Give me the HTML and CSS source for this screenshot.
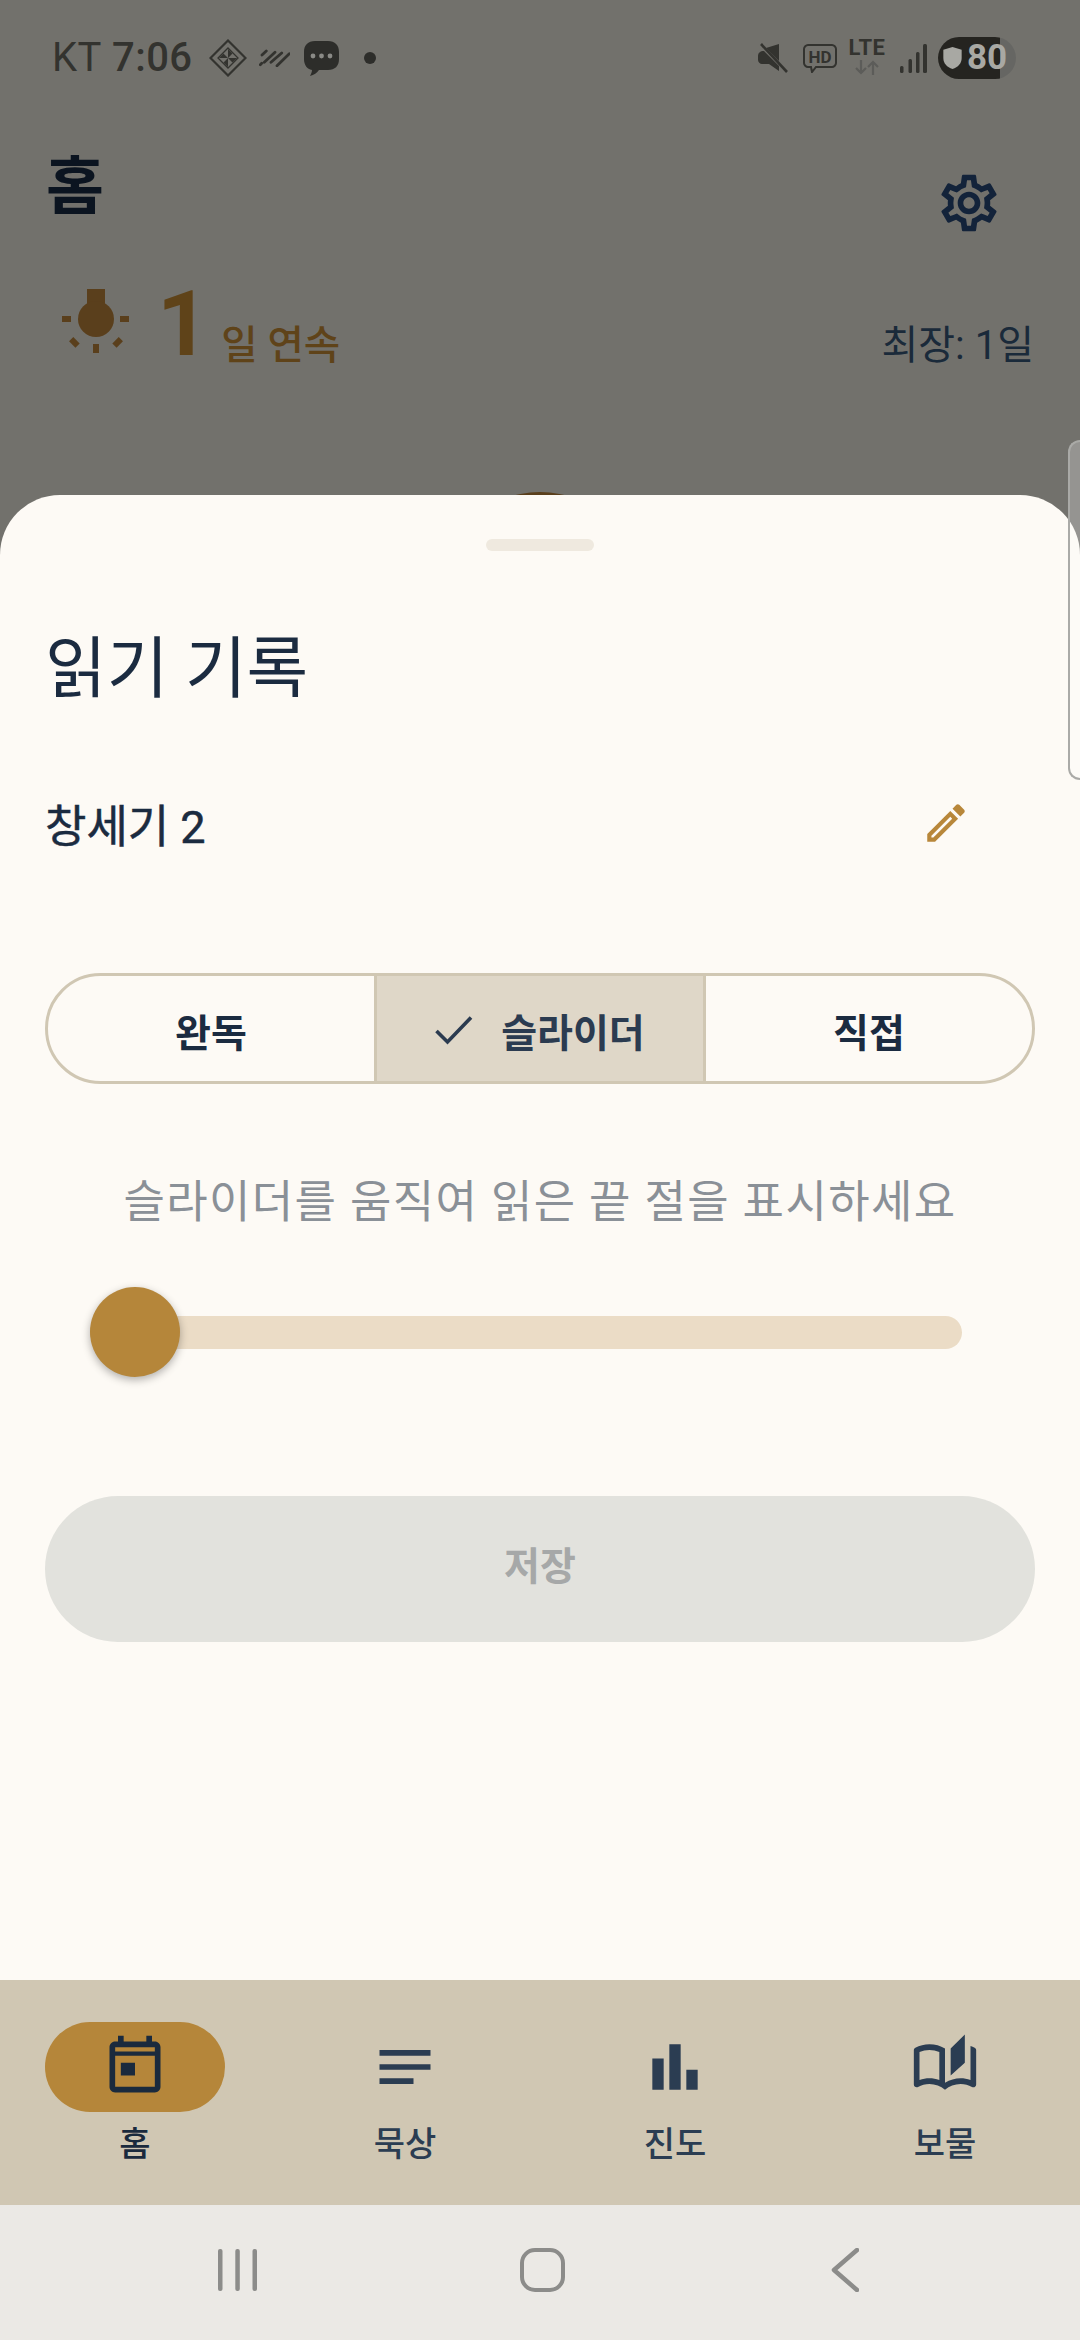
FILE: index.html
```html
<!DOCTYPE html>
<html lang="ko">
	<head>
		<meta charset="UTF-8" />
		<meta name="viewport" content="width=device-width, initial-scale=1.0" />
		<title>읽기 기록</title>
		<link rel="stylesheet" href="styles.css">
	</head>
	<body>
		<div class="backdrop">
			<div class="status">
				<div class="status-left">
					<span class="clock"><span class="carrier">KT</span> 7:06</span>
					<svg class="st-diamond" viewBox="0 0 38 38" fill="none" stroke="#33332f" stroke-width="1.300">
						<path d="M19 1.500 36.500 19 19 36.500 1.500 19z" stroke-width="2.200" />
						<path d="M19 9 29 19 19 29 9 19z" />
						<path fill="#33332f" stroke="none" d="M19 10l4.500 4.500-4.500 4.500zM28 19l-4.500 4.500-4.500-4.500zM19 28l-4.500-4.500 4.500-4.500zM10 19l4.500-4.500 4.500 4.500z" />
					</svg>
					<svg class="st-stripes" viewBox="0 0 31 18" fill="none" stroke="#33332f" stroke-width="2.800" stroke-linecap="round">
						<path d="M3 6 7.300 2M1.300 15.700 2.700 14.300M5.300 13.300 16 3.300M12 13.300 22.700 4M18 16.700 30.300 4.700" />
					</svg>
					<svg class="st-chat" viewBox="0 0 35 37">
						<path d="M11 1h13c7 0 11 4 11 11v7c0 7-4 11-11 11H15c-2 3-5 5-9 6 1-2 2-4 2-6C3 29 0 25 0 19v-7C0 5 4 1 11 1z" fill="#2d2d2a" />
						<circle cx="9" cy="16" r="2.400" fill="#8a8a86" />
						<circle cx="17.500" cy="16" r="2.400" fill="#8a8a86" />
						<circle cx="26" cy="16" r="2.400" fill="#8a8a86" />
					</svg>
					<span class="st-dot"></span>
				</div>
				<div class="status-right">
					<svg class="st-mute" viewBox="0 0 30 30">
						<path d="M21 1v17L8 5zM6 8l15 15v5L11 21H4c-2 0-4-2-4-4v-4c0-3 2-5 6-5z" fill="#33332f" />
						<path d="M3 1 29 29" stroke="#33332f" stroke-width="2.600" />
					</svg>
					<svg class="st-hd" viewBox="0 0 34 29">
						<path d="M5 1h24c2 0 4 2 4 4v14c0 2-2 4-4 4H13l-4 5-1-5H5c-2 0-4-2-4-4V5c0-2 2-4 4-4z" fill="none" stroke="#33332f" stroke-width="2" />
						<text x="17" y="18.500" text-anchor="middle">HD</text>
					</svg>
					<span class="st-lte">LTE<svg viewBox="0 0 24 15" fill="none" stroke="#5c5c59" stroke-width="2.200"><path d="M6 0v13M1 8l5 5 5-5M18 15V2M13 7l5-5 5 5" /></svg></span>
					<svg class="st-signal" viewBox="0 0 27 29" fill="#33332f">
						<rect x="0" y="22" width="3.500" height="7" rx="1.500" />
						<rect x="8.500" y="15" width="3.500" height="14" rx="1.500" />
						<rect x="16" y="8" width="3.500" height="21" rx="1.500" />
						<rect x="23" y="0" width="4" height="29" rx="1.500" />
					</svg>
					<div class="battery">
						<svg viewBox="0 0 20 24"><path d="M10 0 20 3v9c0 6-4 10-10 12C4 22 0 18 0 12V3z" fill="#a8a8a3" /></svg>
						<span>80</span>
					</div>
				</div>
			</div>

			<div class="topbar">
				<h1 class="home-title">홈</h1>
				<svg class="gear" viewBox="0 0 24 24"><path d="M19.43 12.98c.04-.32.07-.64.07-.98 0-.34-.03-.66-.07-.98l2.11-1.65c.19-.15.24-.42.12-.64l-2-3.46c-.09-.16-.26-.25-.44-.25-.06 0-.12.01-.17.03l-2.49 1c-.52-.4-1.08-.73-1.69-.98l-.38-2.65C14.46 2.18 14.25 2 14 2h-4c-.25 0-.46.18-.49.42l-.38 2.65c-.61.25-1.17.59-1.69.98l-2.49-1c-.06-.02-.12-.03-.18-.03-.17 0-.34.09-.43.25l-2 3.46c-.13.22-.07.49.12.64l2.11 1.65c-.04.32-.07.65-.07.98 0 .33.03.66.07.98l-2.11 1.65c-.19.15-.24.42-.12.64l2 3.46c.09.16.26.25.44.25.06 0 .12-.01.17-.03l2.49-1c.52.4 1.08.73 1.69.98l.38 2.65c.03.24.24.42.49.42h4c.25 0 .46-.18.49-.42l.38-2.65c.61-.25 1.17-.59 1.69-.98l2.49 1c.06.02.12.03.18.03.17 0 .34-.09.43-.25l2-3.46c.12-.22.07-.49-.12-.64l-2.11-1.65zm-1.98-1.71c.04.31.05.52.05.73 0 .21-.02.43-.05.73l-.14 1.13.89.7 1.08.84-.7 1.21-1.27-.51-1.04-.42-.9.68c-.43.32-.84.56-1.25.73l-1.06.43-.16 1.13-.2 1.35h-1.4l-.19-1.35-.16-1.13-1.06-.43c-.43-.18-.83-.41-1.23-.71l-.91-.7-1.06.43-1.27.51-.7-1.21 1.08-.84.89-.7-.14-1.13c-.03-.31-.05-.54-.05-.74s.02-.43.05-.73l.14-1.13-.89-.7-1.08-.84.7-1.21 1.27.51 1.04.42.9-.68c.43-.32.84-.56 1.25-.73l1.06-.43.16-1.13.2-1.35h1.39l.19 1.35.16 1.13 1.06.43c.43.18.83.41 1.23.71l.91.7 1.06-.43 1.27-.51.7 1.21-1.07.85-.89.7.14 1.13zM12 8c-2.21 0-4 1.79-4 4s1.79 4 4 4 4-1.79 4-4-1.79-4-4-4zm0 6c-1.1 0-2-.9-2-2s.9-2 2-2 2 .9 2 2-.9 2-2 2z" /></svg>
			</div>

			<div class="streak">
				<svg class="streak-icon" viewBox="0 0 67 64" fill="#5a3f1c">
					<rect x="25" y="0" width="18" height="24" />
					<circle cx="34" cy="30" r="18" />
					<rect x="0" y="27" width="9" height="6" />
					<rect x="58" y="27" width="9" height="6" />
					<rect x="31" y="55" width="6" height="9" />
					<rect x="9" y="49" width="6" height="9" transform="rotate(-45 12 53)" />
					<rect x="53" y="49" width="6" height="9" transform="rotate(45 56 53)" />
				</svg>
				<span class="streak-num">1</span>
				<span class="streak-unit">일 연속</span>
				<span class="streak-best">최장: 1일</span>
			</div>

			<!-- top of the ring under the sheet -->
			<div class="peek"></div>
		</div>

		<div class="edge-handle"></div>

		<section class="sheet">
			<div class="drag"></div>
			<h2 class="sheet-title">읽기 기록</h2>
			<div class="passage">
				<span>창세기 2</span>
				<svg class="pencil" viewBox="0 0 24 24"><path d="M14.06 9.02l.92.92L5.92 19H5v-.92l9.06-9.06M17.66 3c-.25 0-.51.1-.7.29l-1.83 1.83 3.75 3.75 1.83-1.83c.39-.39.39-1.02 0-1.41l-2.34-2.34c-.2-.2-.45-.29-.71-.29zm-3.6 3.19L3 17.25V21h3.75L17.81 9.94l-3.75-3.75z" /></svg>
			</div>

			<div class="segments">
				<div class="seg">완독</div>
				<div class="seg selected">
					<svg class="check" viewBox="0 0 38 30" fill="none" stroke="#2b3b50" stroke-width="3.600"><path d="M1.500 16 12.500 27 36 2.500" /></svg>
					슬라이더
				</div>
				<div class="seg">직접</div>
			</div>

			<p class="hint">슬라이더를 움직여 읽은 끝 절을 표시하세요</p>

			<div class="slider">
				<div class="track"></div>
				<div class="thumb"></div>
			</div>

			<button class="save" type="button" disabled>저장</button>
		</section>

		<nav class="tabs">
			<div class="tab active">
				<span class="tab-icon"><svg viewBox="0 0 24 24"><path fill-rule="evenodd" d="M19 3h-1V1h-2v2H8V1H6v2H5C3.900 3 3 3.900 3 5v14c0 1.100.9 2 2 2h14c1.100 0 2-.9 2-2V5c0-1.100-.9-2-2-2zM5 5h14v1.500H5zM5 8h14v11H5z" /><path d="M7 10.500h5V15H7z" /></svg></span>
				<span class="tab-label">홈</span>
			</div>
			<div class="tab">
				<span class="tab-icon"><svg viewBox="0 0 24 24"><path d="M3 18h12v-2H3v2zM3 6v2h18V6H3zm0 7h18v-2H3v2z" /></svg></span>
				<span class="tab-label">묵상</span>
			</div>
			<div class="tab">
				<span class="tab-icon"><svg viewBox="0 0 24 24"><path d="M4 9h4v11H4zm12 4h4v7h-4zm-6-9h4v16h-4z" /></svg></span>
				<span class="tab-label">진도</span>
			</div>
			<div class="tab">
				<span class="tab-icon"><svg viewBox="0 0 24 24"><path d="M22.470 5.200C22 4.960 21.510 4.760 21 4.590v12.030C19.860 16.210 18.690 16 17.500 16c-1.900 0-3.780.54-5.500 1.580V5.480C10.380 4.550 8.510 4 6.500 4 4.710 4 3.020 4.440 1.530 5.200 1.200 5.360 1 5.710 1 6.080v12.080c0 .76.81 1.230 1.480.87C3.690 18.400 5.050 18 6.500 18c2.070 0 3.980.82 5.500 2 1.520-1.180 3.430-2 5.500-2 1.450 0 2.810.4 4.020 1.040.67.36 1.480-.12 1.480-.88V6.080c0-.37-.2-.72-.53-.88zM10 16.620C8.860 16.210 7.690 16 6.500 16s-2.360.21-3.500.62V6.710C4.110 6.240 5.280 6 6.500 6c1.200 0 2.390.25 3.500.72v9.900zM19 .5l-5 5V15l5-4.500V.5z" /></svg></span>
				<span class="tab-label">보물</span>
			</div>
		</nav>

		<div class="sysnav">
			<svg class="sys-recent" viewBox="0 0 39 42" fill="#8c8c8a">
				<rect x="0" y="0" width="4.500" height="42" rx="2" />
				<rect x="17.300" y="0" width="4.500" height="42" rx="2" />
				<rect x="34.500" y="0" width="4.500" height="42" rx="2" />
			</svg>
			<span class="sys-home"></span>
			<svg class="sys-back" viewBox="0 0 28 44" fill="none" stroke="#8c8c8a" stroke-width="4.500" stroke-linecap="round" stroke-linejoin="round"><path d="M26 2 3 22l23 20" /></svg>
		</div>
	</body>
</html>
```

FILE: styles.css
```css
* {
	box-sizing: border-box;
}

html,
body {
	margin: 0;
	padding: 0;
}

body {
	position: relative;
	width: 1080px;
	height: 2340px;
	display: flex;
	flex-direction: column;
	overflow: hidden;
	background-color: #72716c;
	font-family: Roboto, "Noto Sans CJK KR", sans-serif;
	color: #1b2b40;
}

/* dimmed page behind the sheet */
.backdrop {
	position: relative;
	height: 495px;
	flex-shrink: 0;
	overflow: hidden;
}

.status {
	height: 116px;
	padding: 0 64px 0 52px;
	display: flex;
	align-items: center;
	justify-content: space-between;
}

.status-left,
.status-right {
	display: flex;
	align-items: center;
}

.clock {
	font-size: 40px;
	font-weight: 500;
	line-height: 44px;
	letter-spacing: 0.4px;
	color: #33332f;
	white-space: nowrap;
}

.carrier {
	font-weight: 400;
}

.st-diamond {
	width: 38px;
	height: 38px;
	margin-left: 17px;
}

.st-stripes {
	width: 31px;
	height: 18px;
	margin-left: 12px;
}

.st-chat {
	width: 35px;
	height: 37px;
	margin-left: 14px;
}

.st-dot {
	width: 12px;
	height: 12px;
	margin-left: 25px;
	border-radius: 50%;
	background-color: #2d2d2a;
}

.st-mute {
	width: 30px;
	height: 30px;
}

.st-hd {
	width: 34px;
	height: 29px;
	margin-left: 15px;
}

.st-hd text {
	font-size: 17px;
	font-weight: 700;
	fill: #33332f;
}

.st-lte {
	width: 38px;
	margin: -4px 0 0 11px;
	font-size: 22px;
	font-weight: 700;
	line-height: 20px;
	letter-spacing: 0.5px;
	color: #33332f;
	text-align: center;
}

.st-lte svg {
	display: block;
	width: 24px;
	height: 15px;
	margin: 2px auto 0;
}

.st-signal {
	width: 27px;
	height: 29px;
	margin-left: 14px;
}

.battery {
	width: 78px;
	height: 42px;
	margin-left: 11px;
	padding-left: 5px;
	border-radius: 21px;
	background: linear-gradient(to right, #252420 62px, #666663 62px);
	display: flex;
	align-items: center;
	color: #a8a8a3;
}

.battery svg {
	width: 19px;
	height: 22px;
}

.battery span {
	margin-left: 5px;
	font-size: 35px;
	font-weight: 700;
	line-height: 42px;
}

.topbar {
	height: 158px;
	padding: 0 77px 0 46px;
	display: flex;
	justify-content: space-between;
	align-items: flex-start;
}

.home-title {
	margin: 36px 0 0;
	font-size: 63px;
	font-weight: 700;
	line-height: 70px;
	color: #0b1420;
}

.gear {
	width: 68px;
	height: 68px;
	margin-top: 53px;
	fill: #13233a;
}

.streak {
	height: 100px;
	padding: 0 46px 0 62px;
	display: flex;
	align-items: flex-end;
	color: #5f4319;
}

.streak-icon {
	width: 67px;
	height: 64px;
	margin-bottom: 21px;
}

.streak-num {
	margin-left: 28px;
	font-size: 91px;
	font-weight: 700;
	line-height: 100px;
}

.streak-unit {
	margin: 0 0 3px 12px;
	font-size: 39.500px;
	font-weight: 500;
	line-height: 50px;
}

.streak-best {
	margin: 0 0 3px auto;
	font-size: 40px;
	line-height: 50px;
	color: #1a2a3a;
}

.peek {
	position: absolute;
	top: 492px;
	left: 440px;
	width: 200px;
	height: 200px;
	border-radius: 50%;
	background-color: #5a3f1c;
}

/* samsung edge panel tab, sits over everything */
.edge-handle {
	position: absolute;
	top: 440px;
	right: 0;
	width: 12px;
	height: 340px;
	border: 2px solid #aaaaa7;
	border-right: none;
	border-radius: 12px 0 0 12px;
	background-color: rgba(255, 255, 255, 0.25);
}

.sheet {
	flex: 1;
	padding: 44px 45px 0;
	border-radius: 60px 60px 0 0;
	background-color: #fdfaf5;
}

.drag {
	width: 108px;
	height: 12px;
	margin: 0 auto;
	border-radius: 6px;
	background-color: #efe9df;
}

.sheet-title {
	margin: 78px 0 0;
	font-size: 67px;
	font-weight: 400;
	line-height: 80px;
}

.passage {
	height: 60px;
	margin-top: 84px;
	padding-right: 64px;
	display: flex;
	align-items: center;
	justify-content: space-between;
	font-size: 45px;
	font-weight: 400;
	-webkit-text-stroke: 0.5px #1b2b40;
}

.pencil {
	width: 50px;
	height: 50px;
	fill: #b8873a;
}

.segments {
	height: 111px;
	margin-top: 120px;
	display: flex;
	border: 3px solid #d0c7b3;
	border-radius: 56px;
	overflow: hidden;
}

.seg {
	flex: 1;
	padding-top: 3px;
	display: flex;
	align-items: center;
	justify-content: center;
	font-size: 39px;
	font-weight: 700;
}

.seg.selected {
	flex: 0 0 332px;
	border-left: 3px solid #d0c7b3;
	border-right: 3px solid #d0c7b3;
	background-color: #dfd7c8;
	color: #2b3b50;
}

.check {
	width: 38px;
	height: 30px;
	margin-right: 28px;
}

.hint {
	margin: 89px 0 0;
	font-size: 45px;
	line-height: 60px;
	letter-spacing: 1.4px;
	text-align: center;
	color: #8a9097;
}

.slider {
	position: relative;
	height: 90px;
	margin: 54px 73px 0 45px;
	display: flex;
	align-items: center;
}

.track {
	width: 100%;
	height: 33px;
	border-radius: 17px;
	background-color: #ebdcc6;
}

.thumb {
	position: absolute;
	top: 0;
	left: 0;
	width: 90px;
	height: 90px;
	border-radius: 50%;
	background-color: #b5863a;
	box-shadow: 0 3px 8px rgba(0, 0, 0, 0.3);
}

.save {
	display: block;
	width: 100%;
	height: 146px;
	margin-top: 119px;
	padding-bottom: 14px;
	border: none;
	border-radius: 73px;
	background-color: #e2e2dd;
	font-family: inherit;
	font-size: 39px;
	font-weight: 700;
	color: #a6a8a8;
}

.tabs {
	height: 225px;
	flex-shrink: 0;
	padding-top: 42px;
	display: grid;
	grid-template-columns: repeat(4, 1fr);
	background-color: #d0c7b3;
}

.tab {
	display: flex;
	flex-direction: column;
	align-items: center;
}

.tab-icon {
	width: 180px;
	height: 90px;
	border-radius: 45px;
	display: flex;
	align-items: center;
	justify-content: center;
}

.tab-icon svg {
	width: 68px;
	height: 68px;
	fill: #2b3d52;
}

.tab.active .tab-icon {
	background-color: #b5863a;
}

.tab.active .tab-icon svg {
	fill: #1a2a3d;
}

.tab-label {
	margin-top: 10px;
	font-size: 34px;
	font-weight: 500;
	line-height: 44px;
	color: #2b3d52;
}

.tab.active .tab-label {
	color: #1a2a3d;
}

.sysnav {
	height: 135px;
	flex-shrink: 0;
	padding: 0 221px 6px 218px;
	display: flex;
	align-items: center;
	justify-content: space-between;
	background-color: #ebe9e5;
}

.sys-recent {
	width: 39px;
	height: 42px;
}

.sys-home {
	width: 45px;
	height: 44px;
	margin-left: -3px;
	border: 4.5px solid #8c8c8a;
	border-radius: 15px;
}

.sys-back {
	width: 28px;
	height: 44px;
}
```
